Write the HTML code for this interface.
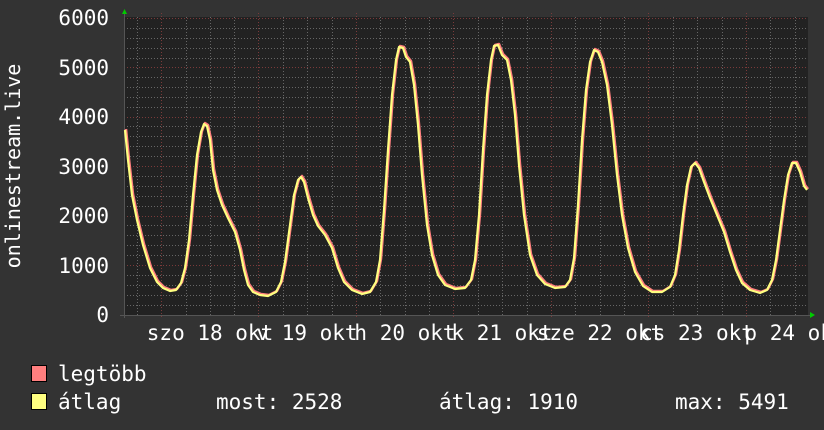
<!DOCTYPE html>
<html><head><meta charset="utf-8"><style>
html,body{margin:0;padding:0;background:#333;}
svg{display:block}
text{fill:#fff}
</style></head><body>
<svg width="824" height="430" viewBox="0 0 824 430" xmlns="http://www.w3.org/2000/svg">
<defs>
<polyline id="c" points="125,130 128,160 132,195 137,220 143,245 150,268 157,282 163,288 170,291 176,290 181,283 185,268 189,240 193,195 197,155 201,132 204,124 207,126 210,140 213,170 217,190 222,205 228,218 235,232 240,250 244,270 248,285 253,292 260,295 268,296 276,292 281,282 285,262 290,225 294,195 298,180 301,177 304,182 308,198 313,215 318,226 325,235 332,248 338,268 344,282 352,290 362,294 370,292 376,282 380,260 384,210 388,150 392,95 396,60 399,47 403,48 406,57 410,62 414,85 418,125 422,175 427,225 432,255 438,275 445,285 455,289 465,288 471,280 475,260 479,215 483,150 487,95 491,60 494,46 498,45 502,55 507,60 511,80 515,115 519,165 524,215 530,255 537,275 545,284 555,288 565,287 570,280 574,258 578,205 582,140 586,90 590,62 594,50 598,52 602,62 607,85 612,125 617,175 622,215 628,248 635,272 643,286 652,292 662,292 670,287 675,275 679,250 683,215 687,185 691,167 695,163 699,168 704,182 710,198 717,215 724,232 730,252 736,270 742,283 750,290 760,293 767,290 772,280 776,260 780,230 784,200 788,175 792,163 796,163 800,172 804,186 807,190"/>
</defs>
<rect width="824" height="430" fill="#333"/>
<rect x="124" y="17" width="684" height="298" fill="#222"/>
<g stroke="#666" stroke-width="1" stroke-dasharray="1,2">
<line x1="124" y1="305.5" x2="808" y2="305.5"/><line x1="124" y1="295.5" x2="808" y2="295.5"/><line x1="124" y1="285.5" x2="808" y2="285.5"/><line x1="124" y1="275.5" x2="808" y2="275.5"/>
<line x1="124" y1="255.5" x2="808" y2="255.5"/><line x1="124" y1="245.5" x2="808" y2="245.5"/><line x1="124" y1="235.5" x2="808" y2="235.5"/><line x1="124" y1="225.5" x2="808" y2="225.5"/>
<line x1="124" y1="206.5" x2="808" y2="206.5"/><line x1="124" y1="196.5" x2="808" y2="196.5"/><line x1="124" y1="186.5" x2="808" y2="186.5"/><line x1="124" y1="176.5" x2="808" y2="176.5"/>
<line x1="124" y1="156.5" x2="808" y2="156.5"/><line x1="124" y1="146.5" x2="808" y2="146.5"/><line x1="124" y1="136.5" x2="808" y2="136.5"/><line x1="124" y1="126.5" x2="808" y2="126.5"/>
<line x1="124" y1="107.5" x2="808" y2="107.5"/><line x1="124" y1="97.5" x2="808" y2="97.5"/><line x1="124" y1="87.5" x2="808" y2="87.5"/><line x1="124" y1="77.5" x2="808" y2="77.5"/>
<line x1="124" y1="58.5" x2="808" y2="58.5"/><line x1="124" y1="48.5" x2="808" y2="48.5"/><line x1="124" y1="38.5" x2="808" y2="38.5"/><line x1="124" y1="28.5" x2="808" y2="28.5"/>
<line x1="137.5" y1="17" x2="137.5" y2="315"/><line x1="186.5" y1="17" x2="186.5" y2="315"/><line x1="210.5" y1="17" x2="210.5" y2="315"/><line x1="234.5" y1="17" x2="234.5" y2="315"/>
<line x1="283.5" y1="17" x2="283.5" y2="315"/><line x1="307.5" y1="17" x2="307.5" y2="315"/><line x1="332.5" y1="17" x2="332.5" y2="315"/>
<line x1="380.5" y1="17" x2="380.5" y2="315"/><line x1="405.5" y1="17" x2="405.5" y2="315"/><line x1="429.5" y1="17" x2="429.5" y2="315"/>
<line x1="478.5" y1="17" x2="478.5" y2="315"/><line x1="502.5" y1="17" x2="502.5" y2="315"/><line x1="527.5" y1="17" x2="527.5" y2="315"/>
<line x1="575.5" y1="17" x2="575.5" y2="315"/><line x1="600.5" y1="17" x2="600.5" y2="315"/><line x1="624.5" y1="17" x2="624.5" y2="315"/>
<line x1="673.5" y1="17" x2="673.5" y2="315"/><line x1="697.5" y1="17" x2="697.5" y2="315"/><line x1="722.5" y1="17" x2="722.5" y2="315"/>
<line x1="770.5" y1="17" x2="770.5" y2="315"/><line x1="795.5" y1="17" x2="795.5" y2="315"/>
</g>
<g stroke="#7a3a3a" stroke-width="1" stroke-dasharray="1,2">
<line x1="124" y1="265.5" x2="808" y2="265.5"/><line x1="124" y1="216.5" x2="808" y2="216.5"/><line x1="124" y1="166.5" x2="808" y2="166.5"/><line x1="124" y1="117.5" x2="808" y2="117.5"/><line x1="124" y1="67.5" x2="808" y2="67.5"/><line x1="124" y1="18.5" x2="808" y2="18.5"/>
<line x1="161.5" y1="13" x2="161.5" y2="318"/><line x1="258.5" y1="13" x2="258.5" y2="318"/><line x1="356.5" y1="13" x2="356.5" y2="318"/><line x1="453.5" y1="13" x2="453.5" y2="318"/><line x1="551.5" y1="13" x2="551.5" y2="318"/><line x1="648.5" y1="13" x2="648.5" y2="318"/><line x1="746.5" y1="13" x2="746.5" y2="318"/>
</g>
<line x1="120" y1="315.5" x2="812" y2="315.5" stroke="#555"/>
<line x1="124.5" y1="14" x2="124.5" y2="318" stroke="#555"/>
<polygon points="122,14 127,14 124.5,9" fill="#0c0"/>
<polygon points="810,312 810,318 815,315" fill="#0c0"/>
<use href="#c" fill="none" stroke="#ff7f7f" stroke-width="2.5" stroke-linejoin="round" transform="translate(1,-1)"/>
<use href="#c" fill="none" stroke="#ffff80" stroke-width="2.2" stroke-linejoin="round"/>
<g font-family="DejaVu Sans Mono, Liberation Mono, monospace" font-size="21" text-anchor="end">
<text x="109" y="25">6000</text><text x="109" y="75">5000</text><text x="109" y="124">4000</text><text x="109" y="174">3000</text><text x="109" y="223">2000</text><text x="109" y="273">1000</text><text x="109" y="322">0</text>
</g>
<g font-family="DejaVu Sans Mono, Liberation Mono, monospace" font-size="21" text-anchor="middle">
<text x="210" y="340">szo 18 okt</text><text x="307" y="340">v 19 okt</text><text x="405" y="340">h 20 okt</text><text x="502" y="340">k 21 okt</text><text x="600" y="340">sze 22 okt</text><text x="697" y="340">cs 23 okt</text><text x="795" y="340">p 24 okt</text>
</g>
<text transform="translate(20,166) rotate(-90)" font-family="DejaVu Sans Mono, Liberation Mono, monospace" font-size="20" text-anchor="middle">onlinestream.live</text>
<rect x="31.5" y="365.5" width="15" height="16" fill="#ff7f7f" stroke="#000"/>
<rect x="31.5" y="393.5" width="15" height="16" fill="#ffff80" stroke="#000"/>
<g font-family="DejaVu Sans Mono, Liberation Mono, monospace" font-size="21">
<text x="58" y="381">legtöbb</text>
<text x="58" y="409">átlag</text>
<text x="216" y="409">most: 2528</text>
<text x="439" y="409">átlag: 1910</text>
<text x="675" y="409">max: 5491</text>
</g>
</svg>
</body></html>
